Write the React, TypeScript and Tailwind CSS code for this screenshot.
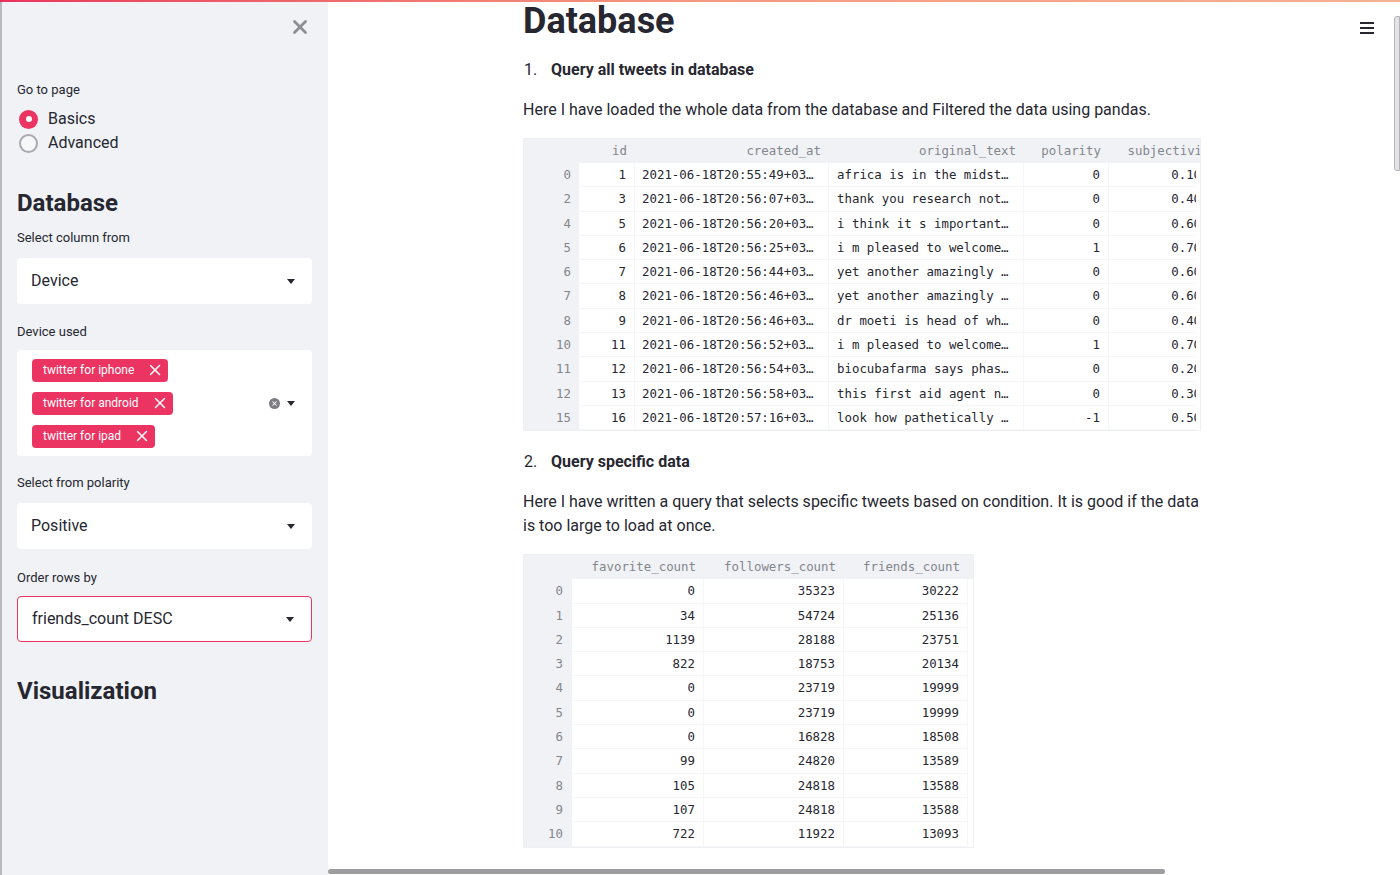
import React from "react";
import { X } from "lucide-react";

const PINK = "bg-[#eb3462]";

const tweets = [
  ["0", "1", "2021-06-18T20:55:49+03…", "africa is in the midst…", "0", "0.1000"],
  ["2", "3", "2021-06-18T20:56:07+03…", "thank you research not…", "0", "0.4000"],
  ["4", "5", "2021-06-18T20:56:20+03…", "i think it s important…", "0", "0.6000"],
  ["5", "6", "2021-06-18T20:56:25+03…", "i m pleased to welcome…", "1", "0.7000"],
  ["6", "7", "2021-06-18T20:56:44+03…", "yet another amazingly …", "0", "0.6000"],
  ["7", "8", "2021-06-18T20:56:46+03…", "yet another amazingly …", "0", "0.6000"],
  ["8", "9", "2021-06-18T20:56:46+03…", "dr moeti is head of wh…", "0", "0.4000"],
  ["10", "11", "2021-06-18T20:56:52+03…", "i m pleased to welcome…", "1", "0.7000"],
  ["11", "12", "2021-06-18T20:56:54+03…", "biocubafarma says phas…", "0", "0.2000"],
  ["12", "13", "2021-06-18T20:56:58+03…", "this first aid agent n…", "0", "0.3000"],
  ["15", "16", "2021-06-18T20:57:16+03…", "look how pathetically …", "-1", "0.5000"],
];

const counts = [
  ["0", "0", "35323", "30222"],
  ["1", "34", "54724", "25136"],
  ["2", "1139", "28188", "23751"],
  ["3", "822", "18753", "20134"],
  ["4", "0", "23719", "19999"],
  ["5", "0", "23719", "19999"],
  ["6", "0", "16828", "18508"],
  ["7", "99", "24820", "13589"],
  ["8", "105", "24818", "13588"],
  ["9", "107", "24818", "13588"],
  ["10", "722", "11922", "13093"],
];

const Caret = () => (
  <svg width="8" height="5" viewBox="0 0 8 5" className="shrink-0">
    <path d="M0 0h8L4 5z" fill="#262730" />
  </svg>
);

const SelectBox = ({ value, focused }: { value: string; focused?: boolean }) => (
  <div
    className={`h-[46px] rounded-[4px] bg-white flex items-center justify-between pl-[14px] pr-[17px] text-[16px] ${
      focused ? "border-[1.5px] border-[#eb3462]" : ""
    }`}
  >
    <span>{value}</span>
    <Caret />
  </div>
);

const Label = ({ children }: { children: React.ReactNode }) => (
  <div className="h-[18px] leading-[18px] text-[13px]">{children}</div>
);

const Tag = ({ text }: { text: string }) => (
  <div className={`${PINK} h-[23px] rounded-[4px] inline-flex items-center pl-[11px] pr-[4px] text-white text-[12px] self-start`}>
    <span>{text}</span>
    <X className="ml-[12px] w-[18px] h-[18px]" strokeWidth={2} />
  </div>
);

const Sidebar = () => (
  <aside className="w-[328px] shrink-0 h-full bg-[#f0f2f6] relative border-l-2 border-[#b8b9be] pl-[15px] pr-[16px] pt-[81px]">
    <X className="absolute top-[16px] right-[17px] w-[22px] h-[22px] text-[#8c8d93]" strokeWidth={3} />
    <Label>Go to page</Label>
    <div className="mt-[8px] flex flex-col">
      <div className="flex items-center h-[24px] gap-[10px]">
        <span className={`ml-[2px] w-[19px] h-[19px] rounded-full ${PINK} flex items-center justify-center`}>
          <span className="w-[6px] h-[6px] rounded-full bg-white" />
        </span>
        <span className="text-[16px]">Basics</span>
      </div>
      <div className="flex items-center h-[24px] gap-[10px]">
        <span className="ml-[2px] w-[19px] h-[19px] rounded-full border-2 border-[#a9aab0] bg-[#f6f7f9]" />
        <span className="text-[16px]">Advanced</span>
      </div>
    </div>

    <h2 className="mt-[33px] h-[30px] leading-[30px] text-[24px] font-bold">Database</h2>

    <div className="mt-[11px]">
      <Label>Select column from</Label>
      <div className="mt-[11px]">
        <SelectBox value="Device" />
      </div>
    </div>

    <div className="mt-[19px]">
      <Label>Device used</Label>
      <div className="mt-[9px] h-[106px] rounded-[4px] bg-white flex items-center pl-[15px] pr-[17px]">
        <div className="flex-1 flex flex-col gap-[10px]">
          <Tag text="twitter for iphone" />
          <Tag text="twitter for android" />
          <Tag text="twitter for ipad" />
        </div>
        <span className="w-[11px] h-[11px] rounded-full bg-[#7d7e84] flex items-center justify-center mr-[7px]">
          <X className="w-[7px] h-[7px] text-white" strokeWidth={3.5} />
        </span>
        <Caret />
      </div>
    </div>

    <div className="mt-[18px]">
      <Label>Select from polarity</Label>
      <div className="mt-[11px]">
        <SelectBox value="Positive" />
      </div>
    </div>

    <div className="mt-[20px]">
      <Label>Order rows by</Label>
      <div className="mt-[9px]">
        <SelectBox value="friends_count DESC" focused />
      </div>
    </div>

    <h2 className="mt-[34px] h-[30px] leading-[30px] text-[24px] font-bold">Visualization</h2>
  </aside>
);

const mono = "font-[family-name:'DejaVu_Sans_Mono',monospace] text-[12.4px]";
const cell = "border-b border-r border-[#f5f6f8]";

const TweetsTable = () => {
  const widths = ["w-[55px]", "w-[56px]", "w-[194px]", "w-[195px]", "w-[85px]", "w-[116px]"];
  const heads = ["", "id", "created_at", "original_text", "polarity", "subjectivity"];
  return (
    <div className={`w-[678px] overflow-hidden border border-[#eef0f4] ${mono}`}>
      <div className="w-[701px] flex h-[24px] leading-[24px] bg-[#f0f2f6] text-[#85868c]">
        {heads.map((h, i) => (
          <div key={i} className={`${widths[i]} shrink-0 text-right pr-[8px] whitespace-nowrap`}>
            {h}
          </div>
        ))}
      </div>
      <div className="w-[672px] overflow-hidden">
        <div className="w-[701px]">
          {tweets.map((r, ri) => (
            <div key={ri} className="flex h-[24.3px] leading-[24.3px]">
              <div className={`${widths[0]} shrink-0 bg-[#f0f2f6] text-right pr-[8px] text-[#85868c]`}>{r[0]}</div>
              <div className={`${widths[1]} shrink-0 text-right pr-[8px] ${cell}`}>{r[1]}</div>
              <div className={`${widths[2]} shrink-0 pl-[7px] whitespace-nowrap ${cell}`}>{r[2]}</div>
              <div className={`${widths[3]} shrink-0 pl-[8px] whitespace-nowrap ${cell}`}>{r[3]}</div>
              <div className={`${widths[4]} shrink-0 text-right pr-[8px] ${cell}`}>{r[4]}</div>
              <div className={`${widths[5]} shrink-0 text-right pr-[8px] ${cell}`}>{r[5]}</div>
            </div>
          ))}
        </div>
      </div>
    </div>
  );
};

const CountsTable = () => {
  const widths = ["w-[48px]", "w-[132px]", "w-[140px]", "w-[124px]"];
  const heads = ["", "favorite_count", "followers_count", "friends_count"];
  return (
    <div className={`w-[451px] border border-[#eef0f4] ${mono}`}>
      <div className="flex h-[24px] leading-[24px] bg-[#f0f2f6] text-[#85868c]">
        {heads.map((h, i) => (
          <div key={i} className={`${widths[i]} shrink-0 text-right pr-[8px] whitespace-nowrap`}>
            {h}
          </div>
        ))}
      </div>
      {counts.map((r, ri) => (
        <div key={ri} className="flex h-[24.3px] leading-[24.3px]">
          <div className={`${widths[0]} shrink-0 bg-[#f0f2f6] text-right pr-[9px] text-[#85868c]`}>{r[0]}</div>
          <div className={`${widths[1]} shrink-0 text-right pr-[8px] ${cell}`}>{r[1]}</div>
          <div className={`${widths[2]} shrink-0 text-right pr-[8px] ${cell}`}>{r[2]}</div>
          <div className={`${widths[3]} shrink-0 text-right pr-[8px] ${cell}`}>{r[3]}</div>
        </div>
      ))}
    </div>
  );
};

export default function App() {
  return (
    <div className="relative flex w-[1400px] h-[875px] overflow-hidden bg-white text-[#262730] font-[family-name:Roboto,'Noto_Sans',sans-serif]">
      {/* top decoration */}
      <div className="absolute top-0 left-0 right-0 h-[2px] bg-linear-to-r from-[#e8325c] via-[#f49a80] to-[#f7b190] z-10" />

      <Sidebar />

      <main className="flex-1 relative h-full overflow-hidden">
        <div className="w-[682px] mx-auto">
          <h1 className="h-[42px] leading-[42px] text-[36px] font-bold">Database</h1>

          <div className="mt-[16px] flex h-[24px] leading-[24px] text-[16px]">
            <span className="w-[28px] pl-[1px]">1.</span>
            <span className="font-bold">Query all tweets in database</span>
          </div>

          <p className="mt-[16px] leading-[24px] text-[16px]">
            Here I have loaded the whole data from the database and Filtered the data using pandas.
          </p>

          <div className="mt-[16px]">
            <TweetsTable />
          </div>

          <div className="mt-[19px] flex h-[24px] leading-[24px] text-[16px]">
            <span className="w-[28px] pl-[1px]">2.</span>
            <span className="font-bold">Query specific data</span>
          </div>

          <p className="mt-[16px] leading-[24px] text-[16px] whitespace-nowrap">
            Here I have written a query that selects specific tweets based on condition. It is good if the data
            <br />
            is too large to load at once.
          </p>

          <div className="mt-[16px]">
            <CountsTable />
          </div>
        </div>

        {/* hamburger */}
        <div className="absolute top-[22px] right-[26px] flex flex-col gap-[3px]">
          <span className="block w-[14px] h-[2px] bg-[#262730]" />
          <span className="block w-[14px] h-[2px] bg-[#262730]" />
          <span className="block w-[14px] h-[2px] bg-[#262730]" />
        </div>

        {/* vertical scrollbar */}
        <div className="absolute top-[16px] right-0 w-[6px] h-[155px] rounded-l-[3px] bg-[#e4e4e6] border border-[#b4b4b8]" />
        {/* horizontal scrollbar */}
        <div className="absolute bottom-[1px] left-0 w-[837px] h-[5px] rounded-full bg-[#9d9d9f]" />
      </main>
    </div>
  );
}
